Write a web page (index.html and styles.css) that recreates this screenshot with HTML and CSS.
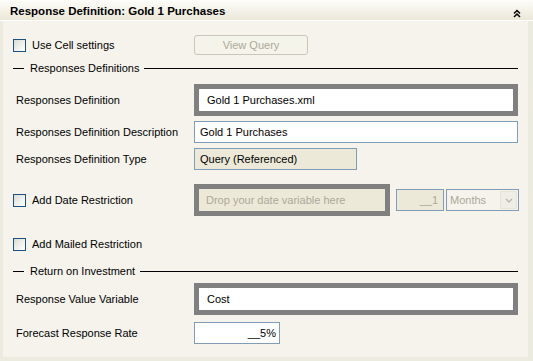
FILE: index.html
```html
<!DOCTYPE html>
<html lang="en">
<head>
    <meta charset="UTF-8">
    <title>Response Definition</title>
    <link rel="stylesheet" href="styles.css">
</head>
<body>
    <div class="header">
        <h1>Response Definition: Gold 1 Purchases</h1>
        <svg class="collapse" viewBox="0 0 8 9" width="8" height="9">
            <path d="M1 4.5 L4 1.5 L7 4.5 M1 8 L4 5 L7 8" fill="none" stroke="#000" stroke-width="1.5"/>
        </svg>
    </div>

    <div class="content">
        <div class="row row-check">
            <label class="check"><span class="box"></span>Use Cell settings</label>
            <button class="btn" disabled>View Query</button>
        </div>

        <div class="section sec-1"><span>Responses Definitions</span></div>

        <div class="row row-tall gap-9">
            <div class="label">Responses Definition</div>
            <div class="drop wide">Gold 1 Purchases.xml</div>
        </div>

        <div class="row gap-5">
            <div class="label">Responses Definition Description</div>
            <div class="field wide">Gold 1 Purchases</div>
        </div>

        <div class="row gap-5">
            <div class="label">Responses Definition Type</div>
            <div class="field readonly type">Query (Referenced)</div>
        </div>

        <div class="row row-tall gap-14">
            <label class="check"><span class="box"></span>Add Date Restriction</label>
            <div class="date-controls">
                <div class="drop disabled date-drop">Drop your date variable here</div>
                <div class="field readonly disabled num">__1</div>
                <div class="field select disabled">
                    Months
                    <span class="arrow">
                        <svg viewBox="0 0 8 5" width="8" height="5">
                            <path d="M1 1 L4 4 L7 1" fill="none" stroke="#b9b8ad" stroke-width="1.3"/>
                        </svg>
                    </span>
                </div>
            </div>
        </div>

        <div class="row row-check gap-18">
            <label class="check"><span class="box"></span>Add Mailed Restriction</label>
        </div>

        <div class="section sec-2"><span>Return on Investment</span></div>

        <div class="row row-tall gap-5">
            <div class="label">Response Value Variable</div>
            <div class="drop wide">Cost</div>
        </div>

        <div class="row gap-8">
            <div class="label">Forecast Response Rate</div>
            <div class="field num rate">__5%</div>
        </div>
    </div>
</body>
</html>
```

FILE: styles.css
```css
:root {
    --outer: #ecebdf;
    --panel: #f5f3ec;
    --field-border: #7f9db9;
    --drop-border: #808080;
    --readonly: #ece9d8;
    --disabled-text: #aca899;
    --text: #000000;
}

* {
    margin: 0;
    padding: 0;
    box-sizing: border-box;
}

body {
    background-color: var(--outer);
    color: var(--text);
    font-family: "Liberation Sans", Arial, sans-serif;
    font-size: 11px;
    width: 533px;
    height: 361px;
    overflow: hidden;
}

.header {
    height: 21px;
    display: flex;
    align-items: center;
    justify-content: space-between;
    padding: 0 12px 0 10px;
    background: linear-gradient(#fdfdfa, #ebe7d8);
    border-bottom: 1px solid #ffffff;
}

.header h1 {
    font-size: 11.5px;
    font-weight: bold;
    margin-top: 1px;
}

.collapse {
    margin-top: 6px;
}

.content {
    background-color: var(--panel);
    margin: 0 5px 0 3px;
    padding: 14px 10px 11px 10px;
    height: 336px;
}

.row {
    display: flex;
    align-items: center;
    height: 22px;
}

.row-tall {
    height: 32px;
}

.row-check {
    height: 20px;
}

.gap-5 { margin-top: 5px; }
.gap-8 { margin-top: 7px; }
.gap-9 { margin-top: 9px; }
.gap-14 { margin-top: 14px; }
.gap-18 { margin-top: 18px; }

.label {
    width: 181px;
    padding-left: 3px;
    flex-shrink: 0;
}

.check {
    width: 181px;
    flex-shrink: 0;
    display: flex;
    align-items: center;
    gap: 6px;
}

.box {
    width: 13px;
    height: 13px;
    border: 1px solid #1c5180;
    background: linear-gradient(135deg, #dcdcd5, #ffffff);
}

.btn {
    width: 114px;
    height: 20px;
    font-family: inherit;
    font-size: 11px;
    color: var(--disabled-text);
    background-color: #f5f4ea;
    border: 1px solid #c9c7ba;
    border-radius: 3px;
}

.section {
    display: flex;
    align-items: center;
    gap: 5px;
    height: 14px;
}

.sec-1 { margin-top: 6px; }
.sec-2 { margin-top: 10px; }

.section::before,
.section::after {
    content: "";
    height: 1px;
    background-color: #000;
}

.section::before {
    width: 11px;
}

.section::after {
    flex: 1;
}

.section span {
    padding: 0 0 0 1px;
}

.drop {
    height: 32px;
    border: 5px solid var(--drop-border);
    background-color: #fff;
    display: flex;
    align-items: center;
    padding-left: 8px;
}

.field {
    height: 22px;
    border: 1px solid var(--field-border);
    background-color: #fff;
    display: flex;
    align-items: center;
    padding-left: 5px;
}

.wide {
    flex: 1;
}

.readonly {
    background-color: var(--readonly);
}

.type {
    width: 163px;
}

.disabled {
    color: var(--disabled-text);
}

.date-controls {
    flex: 1;
    display: flex;
    align-items: center;
}

.date-drop {
    width: 196px;
    background-color: var(--readonly);
    padding-left: 7px;
}

.num {
    justify-content: flex-end;
    padding: 0 5px 0 0;
}

.date-controls .num {
    width: 48px;
    margin-left: 6px;
}

.select {
    width: 73px;
    margin-left: 2px;
    background-color: var(--panel);
    justify-content: space-between;
    padding: 0 1px 0 3px;
}

.arrow {
    width: 17px;
    height: 18px;
    background-color: #efeee6;
    border: 1px solid #e6e4d9;
    display: flex;
    align-items: center;
    justify-content: center;
}

.rate {
    width: 86px;
    padding-right: 3px;
}
```
